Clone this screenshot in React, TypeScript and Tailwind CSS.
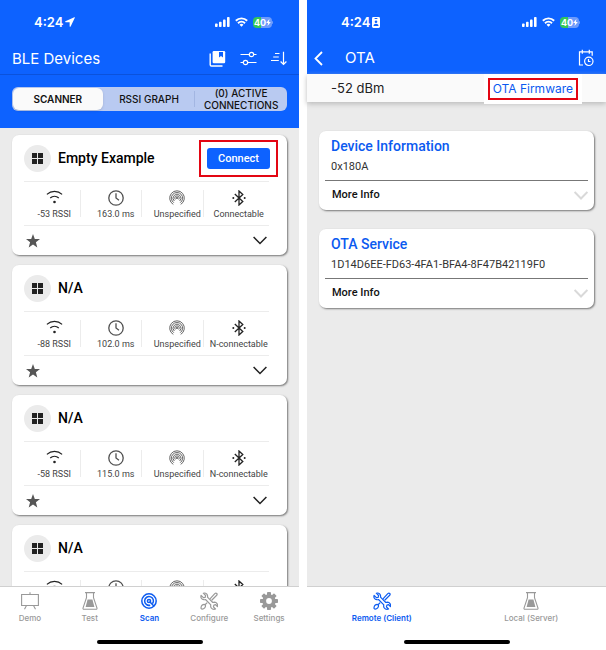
import type { ReactNode } from "react";

const SF = "font-[Inter,'Liberation_Sans',sans-serif]";
const ROBOTO = "font-[Roboto,'Liberation_Sans',sans-serif]";

type Device = { name: string; rssi: string; interval: string; mode: string; connect?: boolean };

const devices: Device[] = [
  { name: "Empty Example", rssi: "-53 RSSI", interval: "163.0 ms", mode: "Connectable", connect: true },
  { name: "N/A", rssi: "-88 RSSI", interval: "102.0 ms", mode: "N-connectable" },
  { name: "N/A", rssi: "-58 RSSI", interval: "115.0 ms", mode: "N-connectable" },
  { name: "N/A", rssi: "-61 RSSI", interval: "121.0 ms", mode: "N-connectable" },
];

/* ---------- icons ---------- */

function SignalBars() {
  return (
    <svg width="15" height="10" viewBox="0 0 15 10" fill="currentColor" aria-hidden="true">
      <rect x="0" y="6.5" width="2.6" height="3.5" rx="0.8" />
      <rect x="4" y="4.8" width="2.6" height="5.2" rx="0.8" />
      <rect x="8" y="2.6" width="2.6" height="7.4" rx="0.8" />
      <rect x="12" y="0" width="2.6" height="10" rx="0.8" />
    </svg>
  );
}

function WifiSolid() {
  return (
    <svg width="13" height="10" viewBox="0 0 14 10" fill="none" stroke="currentColor" strokeWidth="2.1" aria-hidden="true">
      <path d="M.9 3.6a8.7 8.7 0 0 1 12.2 0" />
      <path d="M3.2 6.3a5.5 5.5 0 0 1 7.6 0" />
      <path d="M7 10 4.9 8a3 3 0 0 1 4.2 0z" fill="currentColor" stroke="none" />
    </svg>
  );
}

function Battery() {
  return (
    <span className="flex items-center">
      <span className="flex h-[11px] w-[19px] items-center justify-center rounded-[4px] bg-[linear-gradient(90deg,#34c759_42%,#6d9bfb_42%)] text-[9px] leading-none font-bold">
        40
        <svg width="5" height="7" viewBox="0 0 5 7" fill="currentColor" aria-hidden="true">
          <path d="M3.4 0 .2 3.9h1.9L1.5 7l3.3-4H2.9z" />
        </svg>
      </span>
      <span className="h-[3px] w-px rounded-r bg-[#6d9bfb]" />
    </span>
  );
}

function LocationArrow() {
  return (
    <svg width="10" height="10" viewBox="0 0 11 11" fill="currentColor" aria-hidden="true">
      <path d="M10.2.2.5 4.7c-.6.3-.5 1.1.2 1.1h4.1c.2 0 .3.1.3.3v4.1c0 .7.8.8 1.1.2L10.8.8c.2-.4-.2-.8-.6-.6z" />
    </svg>
  );
}

function IdBadge() {
  return (
    <svg width="8" height="11" viewBox="0 0 8 11" aria-hidden="true">
      <rect width="8" height="11" rx="1.4" fill="#fff" />
      <rect x="2.5" y="1" width="3" height="1" rx="0.5" fill="#0d62ff" />
      <circle cx="4" cy="4.800" r="1.300" fill="#0d62ff" />
      <path d="M1.500 9c0-3 5-3 5 0z" fill="#0d62ff" />
    </svg>
  );
}

function BookmarkStack() {
  return (
    <svg width="17" height="17" viewBox="0 0 17 17" aria-hidden="true">
      <path d="M1.200 3.500v11.200c0 .7.6 1.300 1.300 1.300H13.500" fill="none" stroke="currentColor" strokeWidth="1.400" />
      <path d="M4.800 1H15a1.200 1.200 0 0 1 1.200 1.200v9.900a1.200 1.200 0 0 1-1.200 1.200H4.800a1.200 1.200 0 0 1-1.200-1.200V2.200A1.200 1.200 0 0 1 4.800 1z" fill="currentColor" />
      <path d="M10 2h4v5.400L12 5.900l-2 1.500z" fill="#0d62ff" />
    </svg>
  );
}

function Sliders() {
  return (
    <svg width="17" height="15" viewBox="0 0 17 15" fill="none" stroke="currentColor" strokeWidth="1.200" aria-hidden="true">
      <path d="M.5 3.500h8.700M13.800 3.500h2.700M.5 11.500h2.700M7.800 11.500h8.700" />
      <circle cx="11.500" cy="3.500" r="2.200" />
      <circle cx="5.500" cy="11.500" r="2.200" />
    </svg>
  );
}

function SortDown() {
  return (
    <svg width="16" height="15" viewBox="0 0 16 15" fill="none" stroke="currentColor" strokeWidth="1.200" aria-hidden="true">
      <path d="M4 2.500h4.500M2.200 6h5.600M0 9.500h7.800" />
      <path d="M12.500.8v12.700M9.600 10.500l2.900 3 2.900-3" />
    </svg>
  );
}

function CalendarClock() {
  return (
    <svg width="16" height="18" viewBox="0 0 16 18" fill="none" stroke="currentColor" strokeWidth="1.200" aria-hidden="true">
      <path d="M5 16H1.500V2.800h12.700v4" />
      <path d="M4.300.8v4M11.300.8v4" />
      <circle cx="10.800" cy="12.300" r="4.200" />
      <path d="M10.500 10v2.500h2" />
    </svg>
  );
}

function BackChevron() {
  return (
    <svg width="9" height="15" viewBox="0 0 9 15" fill="none" stroke="currentColor" strokeWidth="1.800" aria-hidden="true">
      <path d="M8 1 1.500 7.500 8 14" />
    </svg>
  );
}

function Grid() {
  return (
    <svg width="11" height="11" viewBox="0 0 11 11" fill="#222" aria-hidden="true">
      <path d="M0 0h5v5H0zM6 0h5v5H6zM0 6h5v5H0zM6 6h5v5H6z" />
    </svg>
  );
}

function WifiLine() {
  return (
    <svg width="17" height="16" viewBox="0 0 17 16" fill="none" stroke="#222" strokeWidth="1.200" aria-hidden="true">
      <path d="M.9 4.400a11.300 11.300 0 0 1 15.200 0M4.200 8a6.600 6.600 0 0 1 8.600 0" />
      <circle cx="8.500" cy="12" r="1.300" fill="#222" stroke="none" />
    </svg>
  );
}

function Clock() {
  return (
    <svg width="16" height="16" viewBox="0 0 16 16" fill="none" stroke="#505050" strokeWidth="1.300" aria-hidden="true">
      <circle cx="8" cy="8" r="7.200" />
      <path d="M8 3.300V8l3 2.300" />
    </svg>
  );
}

function Beacon() {
  return (
    <svg width="16" height="16" viewBox="0 0 16 16" fill="none" stroke="#555" strokeWidth="0.900" aria-hidden="true">
      <path d="M4.300 14.400a7.300 7.300 0 1 1 7.400 0" />
      <path d="M4.800 12.700a5.600 5.600 0 1 1 6.400 0" />
      <path d="M5.300 11a3.900 3.900 0 1 1 5.400 0" />
      <path d="M6.300 9.500a2.200 2.200 0 1 1 3.400 0" />
      <circle cx="8" cy="8" r="1" fill="#555" stroke="none" />
    </svg>
  );
}

function Bluetooth() {
  return (
    <svg width="14" height="16" viewBox="0 0 14 16" fill="none" stroke="#222" strokeWidth="1.300" aria-hidden="true">
      <path d="M2.800 4 10.800 11.500 7 15V1l3.800 3.500L2.800 12" />
      <circle cx="1.300" cy="8" r="1" fill="#222" stroke="none" />
      <circle cx="12.700" cy="8" r="1" fill="#222" stroke="none" />
    </svg>
  );
}

function Star() {
  return (
    <svg width="14" height="14" viewBox="0 0 14 14" fill="#555" aria-hidden="true">
      <path d="m7 0 1.800 4.900 5.200.2-4.100 3.200 1.400 5.200L7 10.500l-4.300 3 1.400-5.200L0 5.100l5.200-.2z" />
    </svg>
  );
}

function ChevronDown({ pale = false }: { pale?: boolean }) {
  return (
    <svg width="14" height="9" viewBox="0 0 14 9" fill="none" stroke={pale ? "#d9d9d9" : "#222"} strokeWidth={pale ? 2 : 1.5} aria-hidden="true">
      <path d="M.6 1 7 7.500 13.400 1" />
    </svg>
  );
}

function Easel() {
  return (
    <svg width="18" height="18" viewBox="0 0 18 18" fill="none" stroke="currentColor" strokeWidth="1.100" aria-hidden="true">
      <path d="M.6 2.500h16.800v11H.6zM9 .3v2M5.500 13.500l-2 3.700M12.500 13.500l2 3.700" />
    </svg>
  );
}

function Flask() {
  return (
    <svg width="16" height="18" viewBox="0 0 16 18" fill="none" stroke="currentColor" strokeWidth="1.100" aria-hidden="true">
      <path d="M3 .600h10M4.500.6v5L1 16.200c-.1.700.2 1.100.8 1.100h12.400c.6 0 .9-.4.800-1.100L11.500 5.600v-5" />
      <path d="M5.600 7.500h4.800l2 7.500H3.600z" fill="currentColor" stroke="none" />
    </svg>
  );
}

function Radar() {
  return (
    <svg width="16" height="16" viewBox="0 0 16 16" fill="none" stroke="currentColor" strokeWidth="1.500" aria-hidden="true">
      <circle cx="8" cy="8" r="7.200" />
      <path d="M11.400 10.800a4.400 4.400 0 1 0-2.200 1.400" />
      <circle cx="8" cy="8" r="1.600" />
      <path d="m8.500 8.500 4.600 4.700" />
    </svg>
  );
}

function Tools() {
  return (
    <svg width="18" height="18" viewBox="0 0 18 18" fill="none" stroke="currentColor" strokeWidth="1.200" strokeLinejoin="round" aria-hidden="true">
      <path d="M3.300 1.200 5.600 3.500 5.200 5.300 3.400 5.700 1.100 3.400C.4 5.500 1.600 7.500 3.800 7.700c.7.100 1.200 0 1.700-.2l5.300 5.400c-.7 2.400.9 4.400 3.200 4.400.6 0 1.100-.1 1.500-.3l-2.100-2.200.5-1.700 1.700-.5 1.800 2c.7-2.100-.7-4.200-3-4.400-.6 0-1.100.1-1.600.3L7.500 5.200c.6-2.500-1.500-4.900-4.200-4z" />
      <path d="m10 6.800 4.800-5.200c1.500-1.200 3 .4 1.900 1.700l-5 4.900" />
      <path d="M7.200 10.600 4.800 13M4.400 12.300l1.100 1.100c.3 1.700-1.300 3.600-3.300 3.700-.8 0-1.300-.6-1.200-1.400.2-1.900 1.800-3.400 3.400-3.400z" />
    </svg>
  );
}

function Gear() {
  return (
    <svg width="18" height="18" viewBox="0 0 18 18" aria-hidden="true">
      <g fill="currentColor">
        {[0, 45, 90, 135].map((angle) => (
          <rect key={angle} x="7" y="0" width="4" height="18" rx="0.8" transform={`rotate(${angle} 9 9)`} />
        ))}
        <circle cx="9" cy="9" r="6.700" />
      </g>
      <circle cx="9" cy="9" r="2.900" fill="#fff" />
    </svg>
  );
}

/* ---------- shared pieces ---------- */

function StatusBar({ mark }: { mark: ReactNode }) {
  return (
    <div className={`flex h-11 items-center justify-between pr-[26px] pl-[34px] ${SF}`}>
      <span className="flex items-center gap-[2px] text-[13px] leading-4 font-semibold">
        4:24 {mark}
      </span>
      <span className="flex items-center gap-[5px]">
        <SignalBars />
        <WifiSolid />
        <Battery />
      </span>
    </div>
  );
}

type Tab = { label: string; icon: ReactNode; active?: boolean };

function TabBar({ tabs }: { tabs: Tab[] }) {
  return (
    <nav className="shrink-0 border-t border-[#d0d0d0] bg-white pb-1.5">
      <div className="flex h-[53px] pt-[5px]">
        {tabs.map((tab) => (
          <button
            key={tab.label}
            type="button"
            className={`flex flex-1 flex-col items-center gap-[3px] text-[8px] leading-[10px] ${SF} ${
              tab.active ? "font-semibold text-[#0d5cf0]" : "font-medium text-[#999]"
            }`}
          >
            <span className="flex h-[18px] items-center">{tab.icon}</span>
            {tab.label}
          </button>
        ))}
      </div>
      <div className="mx-auto h-1 w-[106px] rounded-full bg-black" />
    </nav>
  );
}

/* ---------- scanner phone ---------- */

function Stat({ icon, label }: { icon: ReactNode; label: string }) {
  return (
    <div className="my-2 flex min-w-0 flex-1 flex-col items-center gap-[2px] border-r border-[#ececec] pl-[10px] last:border-r-0">
      <span className="flex h-4 items-center">{icon}</span>
      <span className={`text-[9px] leading-3 whitespace-nowrap text-[#444] ${ROBOTO}`}>{label}</span>
    </div>
  );
}

function DeviceCard({ device }: { device: Device }) {
  return (
    <article className="shrink-0 rounded-[7px] bg-white pr-[18px] pl-3 shadow-[1px_1px_2px_#777]">
      <div className="flex h-[46px] items-center gap-[7px]">
        <span className="flex size-[27px] items-center justify-center rounded-full bg-[#ebebeb]">
          <Grid />
        </span>
        <h2 className={`flex-1 text-[14px] leading-5 font-medium text-black ${ROBOTO}`}>{device.name}</h2>
        {device.connect && (
          <span className="-mr-[9px] border-2 border-[#e30613] p-1.5">
            <button type="button" className={`block h-[21px] w-[63px] rounded-[3px] bg-[#0d62ff] text-[11px] leading-[21px] font-medium text-white ${ROBOTO}`}>
              Connect
            </button>
          </span>
        )}
      </div>
      <div className="border-y border-[#ececec]">
        <div className="mr-[5px] -ml-[5px] flex h-[43px]">
          <Stat icon={<WifiLine />} label={device.rssi} />
          <Stat icon={<Clock />} label={device.interval} />
          <Stat icon={<Beacon />} label="Unspecified" />
          <Stat icon={<Bluetooth />} label={device.mode} />
        </div>
      </div>
      <div className="flex h-[29px] items-center justify-between px-[2px]">
        <button type="button" aria-label="Favorite">
          <Star />
        </button>
        <button type="button" aria-label="Show details">
          <ChevronDown />
        </button>
      </div>
    </article>
  );
}

function ScannerScreen() {
  return (
    <section className="flex min-w-0 flex-1 flex-col bg-[#ebebeb]">
      <header className="shrink-0 bg-[#0d62ff] text-white">
        <StatusBar mark={<LocationArrow />} />
        <div className={`flex h-[31px] items-center justify-between border-b border-[#0b52dc] pr-3 pl-3 ${SF}`}>
          <h1 className="pb-px text-[15px] leading-5">BLE Devices</h1>
          <div className="flex items-center gap-[14px] pb-[2px]">
            <button type="button" aria-label="Saved"><BookmarkStack /></button>
            <button type="button" aria-label="Filter"><Sliders /></button>
            <button type="button" aria-label="Sort"><SortDown /></button>
          </div>
        </div>
        <div className="px-3 pt-3 pb-[17px]">
          <div className={`flex h-6 items-stretch rounded-[6px] bg-[#b9caf1] text-[10px] leading-3 font-medium text-[#111] ${SF}`}>
            <div className="flex w-1/3 p-px">
              <button type="button" className="flex-1 rounded-[6px] bg-[#fafafa] font-semibold shadow-sm">SCANNER</button>
            </div>
            <button type="button" className="my-1 w-1/3 border-r border-[#a3b6e2]">RSSI GRAPH</button>
            <button type="button" className="w-1/3">(0) ACTIVE CONNECTIONS</button>
          </div>
        </div>
      </header>
      <main className="flex min-h-0 flex-1 flex-col gap-[10px] overflow-y-auto px-3 pt-[7px] [scrollbar-width:none]">
        {devices.map((device, i) => (
          <DeviceCard key={i} device={device} />
        ))}
      </main>
      <TabBar
        tabs={[
          { label: "Demo", icon: <Easel /> },
          { label: "Test", icon: <Flask /> },
          { label: "Scan", icon: <Radar />, active: true },
          { label: "Configure", icon: <Tools /> },
          { label: "Settings", icon: <Gear /> },
        ]}
      />
    </section>
  );
}

/* ---------- OTA phone ---------- */

function ServiceCard({ title, uuid }: { title: string; uuid: string }) {
  return (
    <article className={`rounded-[7px] bg-white px-1.5 shadow-[1px_1px_2px_#777] ${ROBOTO}`}>
      <div className="h-[50px] border-b border-[#777] px-1.5 pt-[5px]">
        <h2 className="text-[14px] leading-5 font-medium text-[#0b5af0]">{title}</h2>
        <p className="text-[11px] leading-[22px] text-[#333]">{uuid}</p>
      </div>
      <button type="button" className="flex h-[29px] w-full items-center justify-between pl-[7px] text-[11px] font-medium text-[#111]">
        More Info
        <ChevronDown pale />
      </button>
    </article>
  );
}

function OtaScreen() {
  return (
    <section className="flex min-w-0 flex-1 flex-col bg-[#ebebeb]">
      <header className="shrink-0 text-white">
        <div className="bg-[#0d62ff]">
          <StatusBar mark={<IdBadge />} />
          <div className={`flex h-[30px] items-center pr-3 pb-[2px] pl-[7px] ${SF}`}>
            <button type="button" aria-label="Back" className="mr-[22px]"><BackChevron /></button>
            <h1 className="flex-1 text-[15px] leading-5">OTA</h1>
            <button type="button" aria-label="Log"><CalendarClock /></button>
          </div>
        </div>
        <div className={`flex h-7 items-start justify-between bg-[#fafafa] pr-6 pl-6 shadow-[0_2px_5px_#bbb] ${SF}`}>
          <span className="text-[13px] leading-7 text-[#222]">-52 dBm</span>
          <div className="h-[30px] bg-white px-1 pt-1">
            <button type="button" className="block h-[22px] border-2 border-[#e30613] px-[3px] text-[12px] leading-[18px] text-[#0b5af0]">
              OTA Firmware
            </button>
          </div>
        </div>
      </header>
      <main className="flex min-h-0 flex-1 flex-col gap-[19px] px-3 pt-[29px]">
        <ServiceCard title="Device Information" uuid="0x180A" />
        <ServiceCard title="OTA Service" uuid="1D14D6EE-FD63-4FA1-BFA4-8F47B42119F0" />
      </main>
      <TabBar
        tabs={[
          { label: "Remote (Client)", icon: <Tools />, active: true },
          { label: "Local (Server)", icon: <Flask /> },
        ]}
      />
    </section>
  );
}

export default function App() {
  return (
    <div className="flex h-screen gap-2 bg-white">
      <ScannerScreen />
      <OtaScreen />
    </div>
  );
}
